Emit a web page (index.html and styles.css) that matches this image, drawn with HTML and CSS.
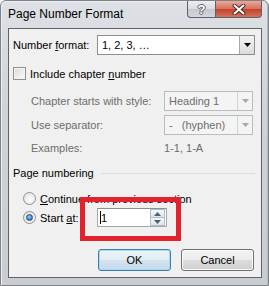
FILE: index.html
```html
<!DOCTYPE html>
<html lang="en">
<head>
  <meta charset="UTF-8" />
  <title>Page Number Format</title>
  <link rel="stylesheet" href="styles.css">
</head>
<body>

  <div class="dialog">
    <!-- Title bar -->
    <div class="titlebar">
      <span class="title">Page Number Format</span>
      <div class="caption-buttons">
        <span class="cap-btn help">?</span>
        <span class="cap-btn close">
          <svg width="14" height="11" viewBox="0 0 14 11">
            <path d="M2.5 1.5 L11.5 9.5 M11.5 1.5 L2.5 9.5" stroke="#4a2a26" stroke-width="4" stroke-linecap="round" fill="none"/>
            <path d="M2.5 1.5 L11.5 9.5 M11.5 1.5 L2.5 9.5" stroke="#ffffff" stroke-width="2" stroke-linecap="round" fill="none"/>
          </svg>
        </span>
      </div>
    </div>

    <!-- Client area -->
    <div class="client">
      <div class="format-row">
        <span class="format-label">Number <u>f</u>ormat:</span>
        <div class="combo">
          <span class="combo-text">1, 2, 3, …</span>
          <span class="combo-arrow">
            <svg width="7" height="4" viewBox="0 0 7 4"><path d="M0 0 H7 L3.5 4 Z" fill="#000"/></svg>
          </span>
        </div>
      </div>

      <div class="check-row">
        <span class="checkbox"></span>
        <span>Include chapter <u>n</u>umber</span>
      </div>

      <div class="chapter-grid">
        <span class="dim">Chapter starts with style:</span>
        <div class="combo disabled">
          <span class="combo-text">Heading 1</span>
          <span class="combo-arrow">
            <svg width="7" height="4" viewBox="0 0 7 4"><path d="M0 0 H7 L3.5 4 Z" fill="#a9a9a9"/></svg>
          </span>
        </div>
        <span class="dim">Use separator:</span>
        <div class="combo disabled">
          <span class="combo-text">-&nbsp;&nbsp;&nbsp;(hyphen)</span>
          <span class="combo-arrow">
            <svg width="7" height="4" viewBox="0 0 7 4"><path d="M0 0 H7 L3.5 4 Z" fill="#a9a9a9"/></svg>
          </span>
        </div>
        <span class="dim">Examples:</span>
        <span class="dim">1-1, 1-A</span>
      </div>

      <div class="group-title">
        <span>Page numbering</span>
        <span class="rule"></span>
      </div>

      <div class="radio-row">
        <span class="radio"></span>
        <span><u>C</u>ontinue from previous section</span>
      </div>

      <div class="radio-row start-row">
        <span class="radio checked"></span>
        <span class="start-label">Start <u>a</u>t:</span>
        <div class="spin">
          <span class="spin-text"><span class="caret"></span>1</span>
          <span class="spin-buttons">
            <span class="spin-btn">
              <svg width="7" height="4" viewBox="0 0 7 4"><path d="M0 4 H7 L3.5 0 Z" fill="#4c607a"/></svg>
            </span>
            <span class="spin-btn">
              <svg width="7" height="4" viewBox="0 0 7 4"><path d="M0 0 H7 L3.5 4 Z" fill="#4c607a"/></svg>
            </span>
          </span>
        </div>
      </div>

      <div class="buttons">
        <button class="btn btn-default">OK</button>
        <button class="btn">Cancel</button>
      </div>

      <!-- annotation box drawn over the dialog -->
      <div class="highlight"></div>
    </div>
  </div>

</body>
</html>
```

FILE: styles.css
```css
body {
  margin: 0;
  background: #ffffff;
  font-family: "Liberation Sans", Arial, sans-serif;
  font-size: 11px;
  color: #000000;
}

.dialog {
  width: 269px;
  height: 286px;
  box-sizing: border-box;
  background: linear-gradient(#dde0e4, #cfd3d8 40%, #c9cdd2);
  border: 1px solid #7d8288;
  border-radius: 6px 6px 0 0;
  box-shadow: inset 1px 1px 0 #eef0f2, inset -1px 0 0 #b5babf;
  display: flex;
  flex-direction: column;
}

.titlebar {
  height: 27px;
  display: flex;
  align-items: flex-start;
}

.title {
  font-size: 12px;
  line-height: 27px;
  padding-left: 7px;
  color: #000000;
}

.caption-buttons {
  margin-left: auto;
  margin-right: 6px;
  display: flex;
}

.cap-btn {
  height: 17px;
  box-sizing: border-box;
  border: 1px solid #5d6268;
  border-top: none;
  display: flex;
  align-items: center;
  justify-content: center;
}

.help {
  width: 28px;
  border-right: none;
  border-bottom-left-radius: 4px;
  background: linear-gradient(#eceef0, #d8dbdf 50%, #c4c8cd 50%, #d3d6da);
  color: #ffffff;
  font-weight: bold;
  font-size: 13px;
  text-shadow: 1px 0 0 #5a5f66, -1px 0 0 #5a5f66, 0 1px 0 #5a5f66, 0 -1px 0 #5a5f66;
}

.close {
  width: 47px;
  border-bottom-right-radius: 4px;
  background: linear-gradient(#e9a99b, #d7705c 50%, #c3402a 50%, #d5735e);
}

/* Client area */
.client {
  position: relative;
  flex: 1;
  margin: 0 6px 7px 7px;
  border: 1px solid #5f646a;
  background: #f0f0f0;
  padding: 6px 6px 6px 4px;
}

.format-row {
  display: flex;
  align-items: center;
  height: 20px;
}

.format-label {
  width: 84px;
}

.combo {
  flex: 1;
  height: 20px;
  box-sizing: border-box;
  border: 1px solid #8b8f94;
  background: #ffffff;
  display: flex;
  align-items: center;
}

.combo-text {
  flex: 1;
  padding-left: 4px;
}

.combo-arrow {
  width: 15px;
  height: 18px;
  box-sizing: border-box;
  border-left: 1px solid #a6a9ad;
  background: linear-gradient(#f3f3f3, #dcdcdc);
  display: flex;
  align-items: center;
  justify-content: center;
}

.combo.disabled {
  border-color: #b9bcbf;
  background: #f4f4f4;
  color: #6d6d6d;
}

.combo.disabled .combo-arrow {
  border-left-color: #d2d4d6;
  background: #f4f4f4;
}

.check-row {
  margin-top: 12px;
  height: 13px;
  display: flex;
  align-items: center;
  gap: 4px;
}

.checkbox {
  width: 13px;
  height: 13px;
  box-sizing: border-box;
  border: 1px solid #8e8f8f;
  background: linear-gradient(135deg, #d9dadb, #fbfbfb);
  box-shadow: inset 0 0 0 1px #f4f4f4;
}

.chapter-grid {
  margin-top: 11px;
  padding-left: 18px;
  display: grid;
  grid-template-columns: 133px 89px;
  grid-template-rows: 20px 20px 18px;
  row-gap: 4px;
  align-items: center;
}

.dim {
  color: #6d6d6d;
}

.group-title {
  margin-top: 9px;
  height: 14px;
  display: flex;
  align-items: center;
}

.rule {
  flex: 1;
  height: 1px;
  background: #d5dfe5;
  margin: 0 0 0 7px;
}

.radio-row {
  margin-top: 12px;
  padding-left: 10px;
  height: 13px;
  display: flex;
  align-items: center;
  gap: 4px;
}

.radio {
  width: 13px;
  height: 13px;
  box-sizing: border-box;
  border-radius: 50%;
  border: 1px solid #8e8f8f;
  background: radial-gradient(circle at 60% 60%, #ffffff, #dcdcdc);
  display: flex;
  align-items: center;
  justify-content: center;
}

.radio.checked::after {
  content: "";
  width: 5px;
  height: 5px;
  border-radius: 50%;
  background: radial-gradient(circle at 40% 35%, #8fd0f5, #1d5fa8);
  border: 1px solid #234a7a;
}

.start-row {
  margin-top: 3px;
  height: 19px;
}

.start-label {
  width: 53px;
}

.spin {
  width: 70px;
  height: 19px;
  box-sizing: border-box;
  border: 1px solid #a4a9ae;
  border-top-color: #8d9196;
  background: #ffffff;
  display: flex;
  align-items: center;
}

.spin-text {
  flex: 1;
  padding-left: 2px;
  display: flex;
  align-items: center;
}

.caret {
  width: 1px;
  height: 13px;
  background: #000000;
  margin-right: 0;
}

.spin-buttons {
  width: 15px;
  height: 17px;
  margin-right: 1px;
  display: flex;
  flex-direction: column;
}

.spin-btn {
  flex: 1;
  box-sizing: border-box;
  border: 1px solid #b3bcc5;
  background: linear-gradient(#f4f7fa, #dde5ec);
  display: flex;
  align-items: center;
  justify-content: center;
}

.spin-btn + .spin-btn {
  border-top: none;
}

.buttons {
  margin-top: 22px;
  padding-right: 1px;
  display: flex;
  justify-content: flex-end;
  gap: 10px;
}

.btn {
  width: 73px;
  height: 22px;
  font-family: "Liberation Sans", Arial, sans-serif;
  font-size: 11px;
  color: #000000;
  border: 1px solid #707070;
  border-radius: 3px;
  background: linear-gradient(#f2f2f2, #ebebeb 50%, #dddddd 50%, #cfcfcf);
  box-shadow: inset 0 0 0 1px #fbfbfb;
  padding: 0;
}

.btn-default {
  border-color: #3c7fb1;
  background: linear-gradient(#edf4f9, #e1ecf4 50%, #d3e3ef 50%, #c8dbe9);
  box-shadow: inset 0 0 0 1px #a9d8f2;
}

.highlight {
  position: absolute;
  left: 71px;
  top: 168px;
  width: 101px;
  height: 44px;
  box-sizing: border-box;
  border: 5px solid #e2222c;
}
```
